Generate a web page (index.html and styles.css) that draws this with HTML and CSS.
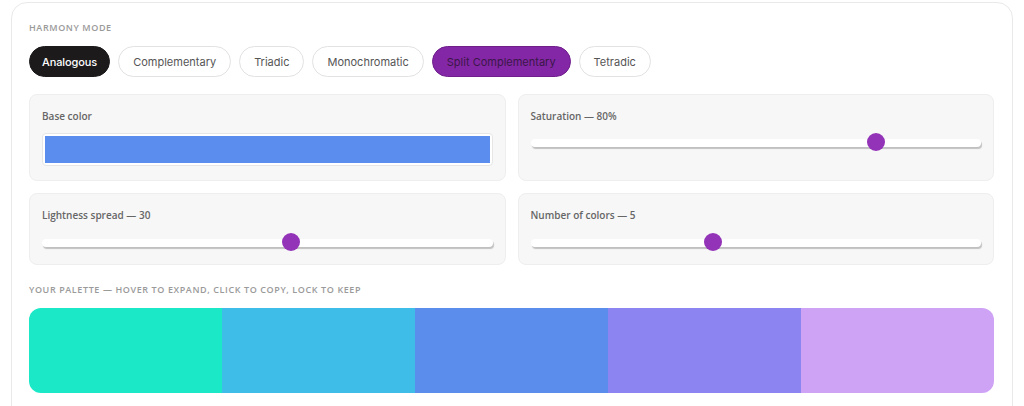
FILE: index.html
```html
<!DOCTYPE html>
<html lang="en">
<head>
  <meta charset="UTF-8" />
  <title>Palette generator</title>
  <link rel="stylesheet" href="styles.css">
</head>
<body>
  <div class="card">
    <div class="secao-titulo">Harmony mode</div>
    <div class="modos">
      <button class="modo ativo">Analogous</button>
      <button class="modo">Complementary</button>
      <button class="modo">Triadic</button>
      <button class="modo">Monochromatic</button>
      <button class="modo roxo">Split Complementary</button>
      <button class="modo">Tetradic</button>
    </div>

    <div class="controles">
      <div class="painel">
        <label>Base color</label>
        <div class="cor-base"><span></span></div>
      </div>
      <div class="painel">
        <label>Saturation — 80%</label>
        <input type="range" min="10" max="100" value="80">
      </div>
      <div class="painel">
        <label>Lightness spread — 30</label>
        <input type="range" min="5" max="50" value="30">
      </div>
      <div class="painel">
        <label>Number of colors — 5</label>
        <input type="range" min="3" max="8" value="5">
      </div>
    </div>

    <div class="secao-titulo paleta-titulo">Your palette — hover to expand, click to copy, lock to keep</div>
    <div class="paleta">
      <div class="amostra" style="background:#1ae8c7"></div>
      <div class="amostra" style="background:#3ebde9"></div>
      <div class="amostra" style="background:#5b8dec"></div>
      <div class="amostra" style="background:#8c84f0"></div>
      <div class="amostra" style="background:#cea3f5"></div>
    </div>
  </div>
</body>
</html>
```

FILE: styles.css
```css
* { box-sizing: border-box; }
body {
  margin: 0;
  background: #fff;
  font-family: Inter, "Noto Sans", sans-serif;
  color: #333;
}
.card {
  margin: 2px 11px 0 11px;
  border: 1px solid #e9e9e9;
  border-radius: 16px;
  padding: 19px 18px 30px 17px;
  min-height: 430px;
}
.secao-titulo {
  font-family: "Open Sans", sans-serif;
  font-size: 9px;
  font-weight: 600;
  letter-spacing: 0.6px;
  text-transform: uppercase;
  color: #9a9a9a;
  line-height: 12px;
}
.modos {
  display: flex;
  gap: 8px;
  margin-top: 12px;
}
.modo {
  font-family: Inter, sans-serif;
  font-size: 11px;
  height: 31px;
  padding: 0 14px;
  border: 1px solid #e2e2e2;
  border-radius: 16px;
  background: #fff;
  color: #555;
  cursor: pointer;
}
.modo.ativo {
  background: #1c1a1b;
  border-color: #1c1a1b;
  color: #fff;
  font-weight: 500;
  padding: 0 12px;
  letter-spacing: -0.1px;
}
.modo.roxo {
  background: #8427a6;
  border-color: #6f1e8c;
  color: #3b1748;
}
.controles {
  display: grid;
  grid-template-columns: 1fr 1fr;
  gap: 12px;
  margin-top: 17px;
}
.painel {
  background: #f7f7f7;
  border: 1px solid #eeeeee;
  border-radius: 8px;
  padding: 14px 12px 14px 12px;
}
.painel label {
  display: block;
  font-family: "Open Sans", sans-serif;
  font-size: 10px;
  font-weight: 600;
  color: #666;
  line-height: 14px;
  margin-bottom: 10px;
}
.painel:nth-child(2) label { margin-bottom: 11px; }
.cor-base {
  height: 33px;
  background: #fff;
  border: 1px solid #e6e6e6;
  border-radius: 4px;
  padding: 2px;
}
.cor-base span {
  display: block;
  height: 100%;
  background: #5b8def;
}
input[type="range"] {
  -webkit-appearance: none;
  appearance: none;
  display: block;
  width: 100%;
  height: 18px;
  margin: 0;
  background: transparent;
}
input[type="range"]::-webkit-slider-runnable-track {
  height: 8px;
  background: #fff;
  border-radius: 4px;
  box-shadow: 1px 2px 1px rgba(0, 0, 0, 0.22);
}
input[type="range"]::-webkit-slider-thumb {
  -webkit-appearance: none;
  width: 18px;
  height: 18px;
  border-radius: 50%;
  background: #9333b8;
  border: none;
  margin-top: -6px;
}
.painel:nth-child(n+3) label { margin-bottom: 12px; }
.painel:nth-child(n+3) { padding-bottom: 12px; }
.paleta-titulo {
  margin-top: 19px;
}
.paleta {
  display: flex;
  height: 85px;
  margin-top: 12px;
  border-radius: 12px;
  overflow: hidden;
}
.amostra {
  flex: 1;
}
```
